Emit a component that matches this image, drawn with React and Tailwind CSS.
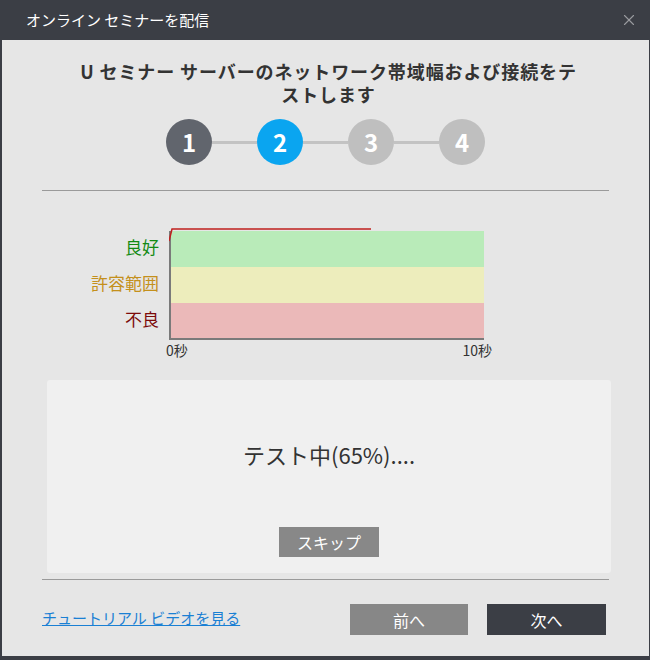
import { X } from 'lucide-react';

const font = { fontFamily: '"Noto Sans CJK JP", "Noto Sans", sans-serif' };

const Step = ({ n, cls }) => (
  <div className={`w-[46px] h-[46px] rounded-full flex items-center justify-center text-white font-bold text-[24px] ${cls}`}>
    {n}
  </div>
);

const Line = () => <div className="w-[45px] h-[3px] bg-[#c3c3c3]" />;

export default function App() {
  return (
    <div className="w-[650px] h-[660px] bg-[#3b3e45] flex flex-col" style={font}>
      {/* Title bar */}
      <div className="h-[40px] flex items-center justify-between pl-[26px] pr-[12px] shrink-0">
        <span className="text-white text-[15px]">オンライン セミナーを配信</span>
        <X className="w-[18px] h-[18px] text-[#9a9ca0]" strokeWidth={1.5} />
      </div>

      {/* Body */}
      <div className="flex-1 bg-[#e6e6e6] ml-[2px] mr-[1px] mb-[4px] flex flex-col px-[40px]">
        <h1 className="mt-[20px] mx-auto w-[512px] text-center text-[#333] font-bold text-[18px] leading-[23px] tracking-[0.9px] translate-x-[3px]">
          U セミナー サーバーのネットワーク帯域幅および接続をテストします
        </h1>

        <div className="mt-[13px] flex items-center justify-center">
          <Step n="1" cls="bg-[#61656d]" />
          <Line />
          <Step n="2" cls="bg-[#0aa5f0]" />
          <Line />
          <Step n="3" cls="bg-[#bfbfbf]" />
          <Line />
          <Step n="4" cls="bg-[#bfbfbf]" />
        </div>

        <div className="mt-[25px] h-px bg-[#9a9a9a]" />

        {/* Chart */}
        <div className="mt-[40px] flex">
          <div className="w-[127px] flex flex-col text-right text-[17px] pr-[10px] -mt-[1px]">
            <div className="h-[36px] leading-[34px] text-[#138a13]">良好</div>
            <div className="h-[36px] leading-[34px] text-[#c4901c]">許容範囲</div>
            <div className="h-[36px] leading-[34px] text-[#7c0a0a]">不良</div>
          </div>
          <div className="flex flex-col">
            <div className="relative w-[315px] border-l-2 border-b-2 border-[#7a7a7a]">
              <div className="h-[36px] bg-[#b9ebb9]" />
              <div className="h-[36px] bg-[#ededbc]" />
              <div className="h-[35px] bg-[#ebb9b9]" />
              <svg className="absolute left-[-2px] top-[-3px]" width="210" height="16">
                <polyline points="0,13 3,1 202,1" fill="none" stroke="#c0201e" strokeWidth="1.5" />
              </svg>
            </div>
            <div className="w-[326px] flex justify-between text-[14px] text-[#333] leading-[18px] -ml-[3px] mt-[1px]">
              <span>0秒</span>
              <span>10秒</span>
            </div>
          </div>
        </div>

        {/* Status panel */}
        <div className="mt-[21px] ml-[5px] w-[564px] h-[193px] bg-[#f0f0f0] rounded-[3px] flex flex-col items-center">
          <div className="mt-[54px] text-[22px] text-[#333] leading-[40px]">テスト中(65%)....</div>
          <button className="mt-[53px] w-[100px] h-[30px] bg-[#888888] text-white text-[16px]">スキップ</button>
        </div>

        <div className="mt-[6px] h-px bg-[#9a9a9a]" />

        {/* Footer */}
        <div className="mt-[24px] flex items-center">
          <a className="text-[15px] text-[#1a80d4] underline flex-1 -mt-[2px]">チュートリアル ビデオを見る</a>
          <button className="w-[118px] h-[31px] bg-[#878787] text-white text-[16px]">前へ</button>
          <button className="ml-[19px] mr-[3px] w-[119px] h-[31px] bg-[#3b3e45] text-white text-[16px]">次へ</button>
        </div>
      </div>
    </div>
  );
}
